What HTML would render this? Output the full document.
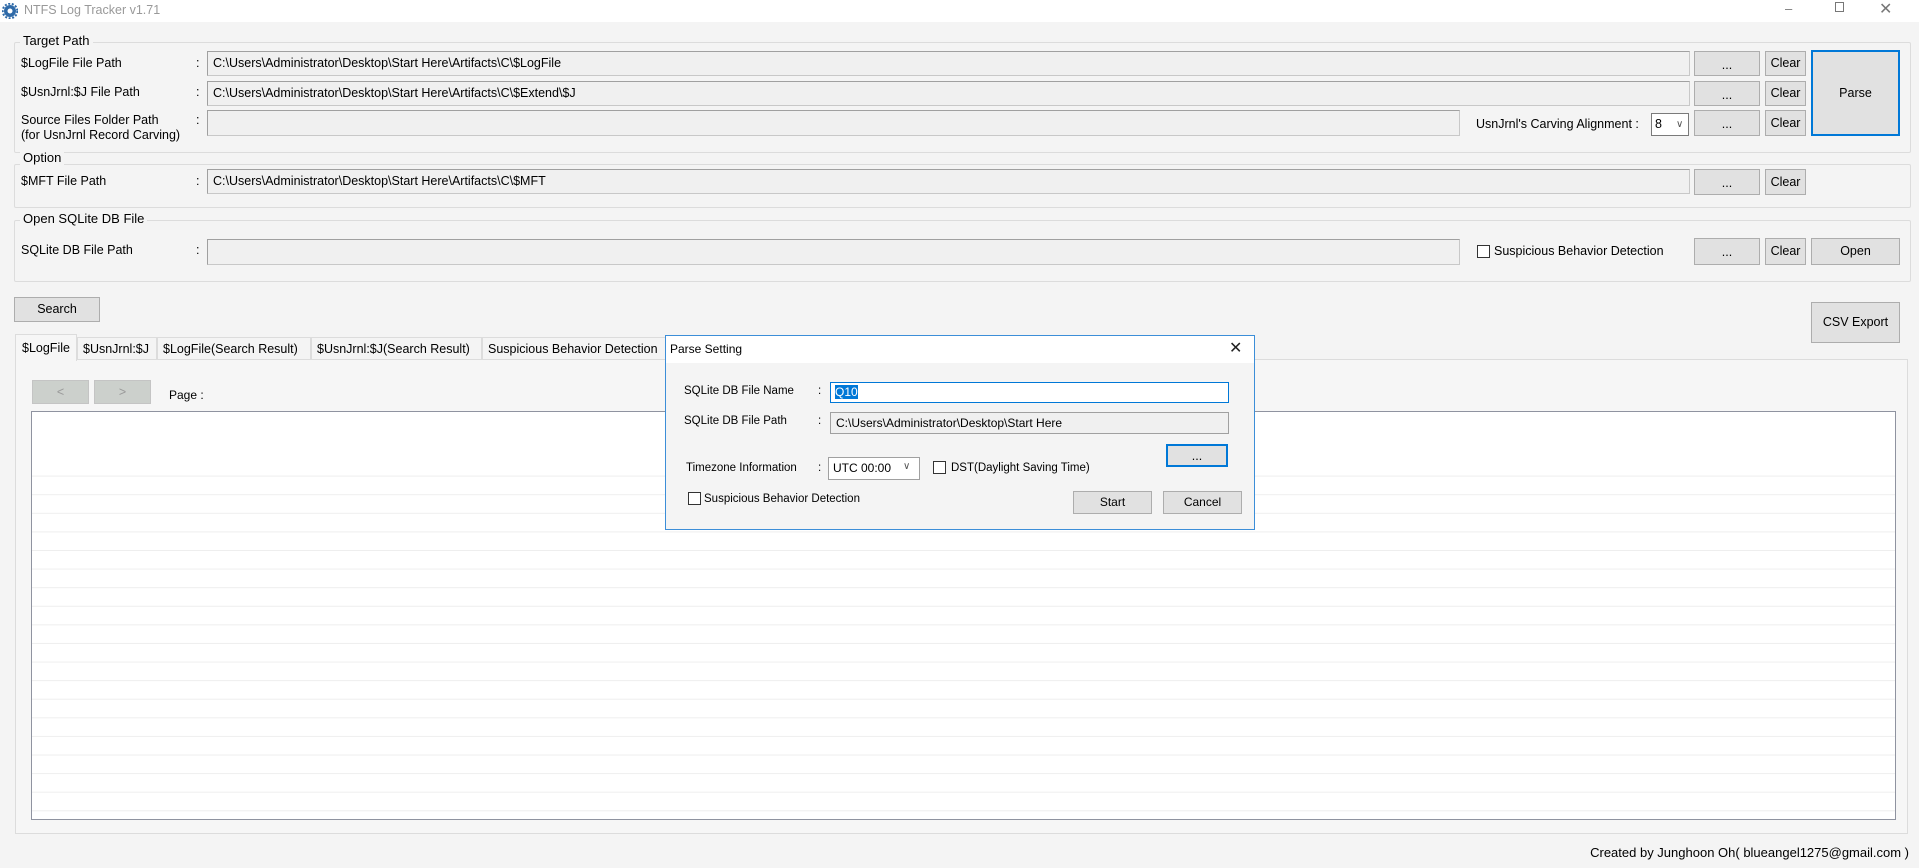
<!DOCTYPE html>
<html><head><meta charset="utf-8"><style>
*{box-sizing:border-box;margin:0;padding:0}
body{width:1919px;height:868px;background:#f4f4f4;font-family:"Liberation Sans",Tahoma,sans-serif;font-size:12.5px;color:#000;position:relative;overflow:hidden}
.a{position:absolute;white-space:nowrap}
.grp{position:absolute;border:1px solid #dcdcdc;border-radius:2px}
.gl{position:absolute;background:#f4f4f4;padding:0 3px;font-size:13px}
.tb{position:absolute;background:#f0f0f0;border:1px solid #a0a0a0;border-right-color:#c8c8c8;border-bottom-color:#c8c8c8;padding-left:5px;font-size:12.5px;line-height:22px;overflow:hidden}
.btn{position:absolute;background:#e1e1e1;border:1px solid #adadad;text-align:center;font-size:12.5px}
.cb{position:absolute;width:13px;height:13px;border:1px solid #333;background:#fff}
</style></head><body>
<div class="a" style="left:0;top:0;width:1919px;height:22px;background:#fff"></div>
<svg class="a" style="left:2px;top:3px" width="16" height="16" viewBox="0 0 16 16"><circle cx="8" cy="8" r="6" fill="#2f6aa8"/><circle cx="8" cy="8" r="7.3" fill="none" stroke="#2f6aa8" stroke-width="2" stroke-dasharray="2 1.6"/><circle cx="8" cy="8" r="2.5" fill="#fff"/></svg>
<div class="a" style="left:24px;top:3px;color:#999;font-size:12.5px">NTFS Log Tracker v1.71</div>
<div class="a" style="left:1785px;top:1px;color:#777;font-size:13px">&#8211;</div>
<div class="a" style="left:1835px;top:2px;width:9px;height:10px;border:1px solid #777"></div>
<div class="a" style="left:1879px;top:-1px;color:#777;font-size:16px">&#x2715;</div>

<div class="grp" style="left:14px;top:42px;width:1897px;height:111px"></div>
<div class="gl" style="left:20px;top:33px">Target Path</div>
<div class="a" style="left:21px;top:56px">$LogFile File Path</div>
<div class="a" style="left:196px;top:56px">:</div>
<div class="tb" style="left:207px;top:51px;width:1483px;height:25px">C:\Users\Administrator\Desktop\Start Here\Artifacts\C\$LogFile</div>
<div class="btn" style="left:1694px;top:51px;width:66px;height:25px;line-height:26px">...</div>
<div class="btn" style="left:1765px;top:51px;width:41px;height:25px;line-height:23px">Clear</div>
<div class="a" style="left:21px;top:85px">$UsnJrnl:$J File Path</div>
<div class="a" style="left:196px;top:85px">:</div>
<div class="tb" style="left:207px;top:81px;width:1483px;height:25px">C:\Users\Administrator\Desktop\Start Here\Artifacts\C\$Extend\$J</div>
<div class="btn" style="left:1694px;top:81px;width:66px;height:25px;line-height:26px">...</div>
<div class="btn" style="left:1765px;top:81px;width:41px;height:25px;line-height:23px">Clear</div>
<div class="a" style="left:21px;top:113px;line-height:15px">Source Files Folder Path<br>(for UsnJrnl Record Carving)</div>
<div class="a" style="left:196px;top:113px">:</div>
<div class="tb" style="left:207px;top:110px;width:1253px;height:26px"></div>
<div class="a" style="left:1476px;top:117px;font-size:12.5px">UsnJrnl's Carving Alignment :</div>
<div class="a" style="left:1651px;top:113px;width:38px;height:23px;background:#fff;border:1px solid #7a7a7a;padding-left:3px;line-height:21px">8<span style="position:absolute;left:24px;top:0;color:#555;font-size:10px">&#8744;</span></div>
<div class="btn" style="left:1694px;top:110px;width:66px;height:26px;line-height:26px">...</div>
<div class="btn" style="left:1765px;top:110px;width:41px;height:26px;line-height:24px">Clear</div>
<div class="btn" style="left:1811px;top:50px;width:89px;height:86px;line-height:82px;border:2px solid #0078d7">Parse</div>

<div class="grp" style="left:14px;top:164px;width:1897px;height:44px"></div>
<div class="gl" style="left:20px;top:150px">Option</div>
<div class="a" style="left:21px;top:174px">$MFT File Path</div>
<div class="a" style="left:196px;top:174px">:</div>
<div class="tb" style="left:207px;top:169px;width:1483px;height:25px">C:\Users\Administrator\Desktop\Start Here\Artifacts\C\$MFT</div>
<div class="btn" style="left:1694px;top:169px;width:66px;height:26px;line-height:26px">...</div>
<div class="btn" style="left:1765px;top:169px;width:41px;height:26px;line-height:24px">Clear</div>

<div class="grp" style="left:14px;top:220px;width:1897px;height:62px"></div>
<div class="gl" style="left:20px;top:211px">Open SQLite DB File</div>
<div class="a" style="left:21px;top:243px">SQLite DB File Path</div>
<div class="a" style="left:196px;top:243px">:</div>
<div class="tb" style="left:207px;top:239px;width:1253px;height:26px"></div>
<div class="cb" style="left:1477px;top:245px"></div>
<div class="a" style="left:1494px;top:244px">Suspicious Behavior Detection</div>
<div class="btn" style="left:1694px;top:238px;width:66px;height:27px;line-height:27px">...</div>
<div class="btn" style="left:1765px;top:238px;width:41px;height:27px;line-height:25px">Clear</div>
<div class="btn" style="left:1811px;top:238px;width:89px;height:27px;line-height:25px">Open</div>

<div class="btn" style="left:14px;top:297px;width:86px;height:25px;line-height:23px">Search</div>
<div class="btn" style="left:1811px;top:302px;width:89px;height:41px;line-height:39px">CSV Export</div>

<div class="a" style="left:15px;top:359px;width:1893px;height:475px;background:#f6f6f6;border:1px solid #dcdcdc"></div>
<div class="a" style="left:15px;top:334px;width:62px;height:27px;background:#f6f6f6;border:1px solid #dcdcdc;border-bottom:none;padding:6px 0 0 6px">$LogFile</div>
<div class="a" style="left:77px;top:337px;width:80px;height:22px;border:1px solid #dcdcdc;border-bottom:none;padding:4px 0 0 5px">$UsnJrnl:$J</div>
<div class="a" style="left:157px;top:337px;width:154px;height:22px;border:1px solid #dcdcdc;border-bottom:none;padding:4px 0 0 5px">$LogFile(Search Result)</div>
<div class="a" style="left:311px;top:337px;width:171px;height:22px;border:1px solid #dcdcdc;border-bottom:none;padding:4px 0 0 5px">$UsnJrnl:$J(Search Result)</div>
<div class="a" style="left:482px;top:337px;width:190px;height:22px;border:1px solid #dcdcdc;border-bottom:none;padding:4px 0 0 5px">Suspicious Behavior Detection</div>
<div class="btn" style="left:32px;top:380px;width:57px;height:24px;line-height:22px;background:#ccd0cc;border-color:#c4c4c4;color:#999">&lt;</div>
<div class="btn" style="left:94px;top:380px;width:57px;height:24px;line-height:22px;background:#ccd0cc;border-color:#c4c4c4;color:#999">&gt;</div>
<div class="a" style="left:169px;top:388px;font-size:12px">Page :</div>
<div class="a" style="left:31px;top:411px;width:1865px;height:409px;background:#fff;border:1px solid #8f93a0;background-image:repeating-linear-gradient(#fff 0,#fff 17.6px,#eeeeee 17.6px,#eeeeee 18.6px);background-position:0 46px;background-repeat:repeat-y;background-size:100% 18.6px"></div>
<div class="a" style="left:32px;top:412px;width:1863px;height:46px;background:#fff"></div>
<div class="a" style="right:10px;top:845px;font-size:13px">Created by Junghoon Oh( blueangel1275@gmail.com )</div>

<div class="a" style="left:665px;top:335px;width:590px;height:195px;background:#f4f4f4;border:1px solid #3c8ed8"></div>
<div class="a" style="left:666px;top:336px;width:588px;height:27px;background:#fff"></div>
<div class="a" style="left:670px;top:342px;font-size:12px">Parse Setting</div>
<div class="a" style="left:1229px;top:338px;font-size:16px;color:#222">&#x2715;</div>
<div class="a" style="left:684px;top:385px;font-size:11.5px">SQLite DB File Name</div>
<div class="a" style="left:818px;top:385px;font-size:11.5px">:</div>
<div class="a" style="left:830px;top:382px;width:399px;height:21px;background:#fff;border:1px solid #0078d7;padding:2px 0 0 4px;font-size:12px"><span style="background:#0078d7;color:#fff">Q10</span></div>
<div class="a" style="left:684px;top:415px;font-size:11.5px">SQLite DB File Path</div>
<div class="a" style="left:818px;top:415px;font-size:11.5px">:</div>
<div class="a" style="left:830px;top:412px;width:399px;height:22px;background:#f0f0f0;border:1px solid #a0a0a0;padding:3px 0 0 5px;font-size:12px">C:\Users\Administrator\Desktop\Start Here</div>
<div class="btn" style="left:1166px;top:444px;width:62px;height:23px;line-height:20px;border:2px solid #0078d7">...</div>
<div class="a" style="left:686px;top:462px;font-size:11.5px">Timezone Information</div>
<div class="a" style="left:818px;top:462px;font-size:11.5px">:</div>
<div class="a" style="left:828px;top:457px;width:92px;height:23px;background:#fff;border:1px solid #a0a0a0;padding:3px 0 0 4px;font-size:12px">UTC 00:00<span style="position:absolute;left:74px;top:3px;color:#555;font-size:10px">&#8744;</span></div>
<div class="cb" style="left:933px;top:461px"></div>
<div class="a" style="left:951px;top:462px;font-size:11.5px">DST(Daylight Saving Time)</div>
<div class="cb" style="left:688px;top:492px"></div>
<div class="a" style="left:704px;top:493px;font-size:11.5px">Suspicious Behavior Detection</div>
<div class="btn" style="left:1073px;top:491px;width:79px;height:23px;line-height:21px;font-size:12px">Start</div>
<div class="btn" style="left:1163px;top:491px;width:79px;height:23px;line-height:21px;font-size:12px">Cancel</div>
</body></html>
